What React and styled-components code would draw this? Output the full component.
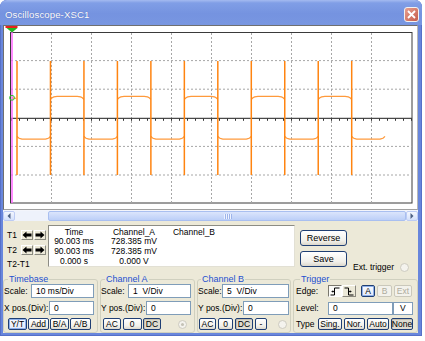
import React from 'react';
import styled, { createGlobalStyle, css } from 'styled-components';

const GlobalStyle = createGlobalStyle`
  html, body { margin: 0; padding: 0; background: #fff; }
  body {
    font-family: "Liberation Sans", Arial, sans-serif;
    font-size: 8.5px;
    color: #000;
  }
  * { box-sizing: border-box; }
`;

const Window = styled.div`
  width: 422px;
  height: 336px;
  display: flex;
  flex-direction: column;
  background: #6886dc;
  border-radius: 7px 7px 0 0;
  overflow: hidden;
  box-shadow: inset 0 0 0 1px #5670c8;
`;

const TitleBar = styled.div`
  height: 25px;
  flex-shrink: 0;
  display: flex;
  align-items: flex-start;
  justify-content: space-between;
  padding: 0 3px 0 5px;
  background: linear-gradient(#a4baf0 0%, #809ee6 12%, #7593e0 55%, #7896e1 100%);
`;

const Title = styled.span`
  color: #fff;
  font-size: 9.6px;
  line-height: 12px;
  margin-top: 9px;
  letter-spacing: 0.1px;
  text-shadow: 0 0 1px rgba(40, 60, 140, 0.6);
`;

const CloseButton = styled.div`
  width: 15px;
  height: 15px;
  margin-top: 7px;
  border: 1px solid #f2f2f2;
  border-radius: 3px;
  background: linear-gradient(135deg, #e7a090, #c65d4b);
  display: flex;
  align-items: center;
  justify-content: center;
`;

const Body = styled.div`
  flex: 1;
  margin: 0 4px 3px 3px;
  background: #ece9d8;
  display: flex;
  flex-direction: column;
`;

const ScopePanel = styled.div`
  height: 185px;
  background: #fff;
  border: 1px solid;
  border-color: #6f6f6f #b8b8b8 #a0a0a0 #6f6f6f;
  svg { display: block; }
`;

const Scrollbar = styled.div`
  height: 11px;
  display: flex;
  background: #f3f5fb;
  padding-top: 1px;
`;

const ScrollButton = styled.div`
  width: 12px;
  display: flex;
  align-items: center;
  justify-content: center;
  background: linear-gradient(#f4f7fe, #d4e0fb);
  border: 1px solid #bccbf4;
  border-radius: 2px;
`;

const Track = styled.div`
  flex: 1;
  display: flex;
  padding-left: 33px;
  background: #eef2fb;
`;

const Thumb = styled.div`
  flex: 1;
  display: flex;
  align-items: center;
  justify-content: center;
  gap: 1px;
  border: 1px solid #a9bff0;
  border-radius: 2px;
  background: linear-gradient(#dbe5fc, #bccff8);
  span {
    width: 1px;
    height: 5px;
    background: #eef3ff;
    box-shadow: 1px 0 0 #9db4ea;
  }
`;

const Controls = styled.div`
  flex: 1;
  display: flex;
  flex-direction: column;
`;

const CursorRow = styled.div`
  display: flex;
  margin-top: 4px;
  height: 45px;
`;

const CursorLabels = styled.div`
  display: grid;
  grid-template-columns: 14px 24px;
  grid-template-rows: 15px 15px 13px;
  align-items: center;
  margin-left: 4px;
  padding-top: 2px;
`;

const ArrowPair = styled.div`
  display: flex;
  gap: 1px;
`;

const ArrowButton = styled.div`
  width: 12px;
  height: 10px;
  display: flex;
  align-items: center;
  justify-content: center;
  background: #ece9d8;
  border: 1px solid;
  border-color: #fff #8a8a80 #8a8a80 #fff;
`;

const Readout = styled.div`
  width: 247px;
  height: 42px;
  margin-left: 3px;
  background: #fff;
  border: 1px solid;
  border-color: #8c8c84 #e2e0d4 #e2e0d4 #8c8c84;
  display: grid;
  grid-template-columns: 44px 76px 44px;
  grid-auto-rows: 9.7px;
  line-height: 9.7px;
  padding: 1.5px 0 0 3px;
  text-align: center;
  white-space: nowrap;
`;

const ActionColumn = styled.div`
  display: flex;
  flex-direction: column;
  margin-left: 5px;
  padding-top: 5px;
  gap: 5px;
`;

const xpFace = css`
  border: 1px solid #1f3f74;
  border-radius: 3px;
  background: linear-gradient(#ffffff, #f1f0ea 70%, #dcd8cc);
  font-family: inherit;
  color: #000;
  padding: 0;
  display: flex;
  align-items: center;
  justify-content: center;
`;

const ActionButton = styled.div`
  ${xpFace};
  width: 47px;
  height: 16px;
  font-size: 9px;
`;

const SaveRow = styled.div`
  display: flex;
  align-items: flex-end;
`;

const ExtTrigger = styled.div`
  display: flex;
  align-items: center;
  margin-left: 6px;
  margin-bottom: -5px;
  gap: 6px;
`;

const Radio = styled.div`
  width: 9px;
  height: 9px;
  border-radius: 50%;
  border: 1px solid #cdcbc0;
  background: #f4f3ee;
  display: flex;
  align-items: center;
  justify-content: center;
  ${(p) => p.$dot && css`
    &::after {
      content: "";
      width: 3px;
      height: 3px;
      border-radius: 50%;
      background: #c4c2b6;
    }
  `}
`;

const GroupRow = styled.div`
  display: flex;
  gap: 2px;
  margin-top: 4px;
  height: 59px;
`;

const Group = styled.fieldset`
  width: ${(p) => p.$w}px;
  margin: 0;
  min-width: 0;
  padding: 0 ${(p) => p.$pr ?? 3}px 2px ${(p) => p.$pl ?? 0}px;
  border: 1px solid #d0d0bf;
  border-radius: 3px;
  display: flex;
  flex-direction: column;
  gap: 3px;
`;

const Legend = styled.legend`
  color: #1d4fd0;
  font-size: 9px;
  line-height: 10px;
  padding: 0 1px;
  margin-left: ${(p) => p.$ml ?? 4}px;
`;

const Row = styled.div`
  display: flex;
  align-items: center;
  height: ${(p) => p.$h}px;
  padding-left: ${(p) => p.$pl ?? 0}px;
  gap: ${(p) => p.$gap ?? 0}px;
`;

const Label = styled.span`
  flex-shrink: 0;
  width: ${(p) => (p.$w ? `${p.$w}px` : 'auto')};
  white-space: nowrap;
`;

const Field = styled.div`
  width: ${(p) => p.$w}px;
  height: ${(p) => p.$h ?? 14}px;
  margin-left: ${(p) => (p.$auto ? 'auto' : '0')};
  background: #fff;
  border: 1px solid #7f9db9;
  padding-left: ${(p) => p.$pl ?? 4}px;
  display: flex;
  align-items: center;
  white-space: pre;
`;

const SmallButton = styled.div`
  ${xpFace};
  width: ${(p) => p.$w}px;
  height: 12px;
  border-radius: 2px;
  flex-shrink: 0;
  margin-left: ${(p) => p.$ml ?? 0}px;
  ${(p) => p.$mode === 'focus' && css`
    box-shadow: inset 0 0 0 1px #8fb0ea;
    background: linear-gradient(#f6f9ff, #e3eaf8);
  `}
  ${(p) => p.$mode === 'down' && css`
    background: #dedbd0;
    box-shadow: inset 1px 1px 0 #c4c0b2;
  `}
  ${(p) => p.$mode === 'off' && css`
    border-color: #cac8bb;
    color: #aeab9c;
    background: #f3f2ec;
  `}
`;

const EdgePair = styled.div`
  display: flex;
`;

const EdgeButton = styled.div`
  width: 14px;
  height: 12px;
  display: flex;
  align-items: center;
  justify-content: center;
  border: 1px solid;
  ${(p) => (p.$down
    ? css`
      border-color: #7a786e #fff #fff #7a786e;
      background: #fbfbf8;
    `
    : css`
      border-color: #fff #8a887e #8a887e #fff;
      background: #ece9d8;
    `)}
`;

const Spacer = styled.div`
  margin-left: auto;
  margin-right: ${(p) => p.$mr ?? 0}px;
`;

// trace edges, px in page coordinates
const edges = Array.from({ length: 11 }, (_, k) => 17 + 33.47 * k);

function plateau(x0, x1, high) {
  const pts = [];
  const n = 20;
  for (let i = 0; i <= n; i++) {
    const t = i / n;
    const u = 2 * t - 1;
    const bump = 1 - Math.pow(u, 8);
    const y = high ? 99.4 - 3 * bump : 136.4 + 2.8 * bump;
    pts.push(`${(x0 + (x1 - x0) * t).toFixed(2)},${y.toFixed(2)}`);
  }
  return 'M' + pts.join(' L');
}

function tracePath() {
  let d = 'M12 97.8 L16 98.4 ';
  edges.forEach((e, k) => {
    const next = k < edges.length - 1 ? edges[k + 1] : 385;
    d += plateau(e, next, k % 2 === 1) + ' ';
  });
  return d;
}

function ScopeDisplay() {
  const vlines = [];
  for (let x = 51; x < 411; x += 40) vlines.push(x);
  const hlines = [60.6, 89.2, 146.4, 175];
  const ticks = [];
  for (let x = 11; x <= 411; x += 8) ticks.push(x);

  return (
    <svg width="413" height="183" viewBox="4 26 413 183">
      <rect x="10.5" y="32.5" width="401.5" height="170.5" fill="#fff" stroke="#3a3a3a" />
      {vlines.map((x) => (
        <line key={`v${x}`} x1={x + 0.5} y1="33" x2={x + 0.5} y2="203"
          stroke="#a6a6a6" strokeDasharray="2 2" />
      ))}
      {hlines.map((y) => (
        <line key={`h${y}`} x1="11" y1={y} x2="412" y2={y}
          stroke="#a6a6a6" strokeDasharray="2 2" />
      ))}
      <line x1="11" y1="118.4" x2="412" y2="118.4" stroke="#4a4a4a" strokeWidth="1.4" />
      {ticks.map((x) => (
        <line key={`t${x}`} x1={x + 0.5} y1="118.5" x2={x + 0.5} y2="120.8" stroke="#333" />
      ))}
      <path d={tracePath()} fill="none" stroke="#ff9a3c" strokeWidth="1.3" />
      {edges.map((e) => (
        <line key={`e${e}`} x1={e} y1="61" x2={e} y2="175" stroke="#ff8410" strokeWidth="1.5" />
      ))}
      <line x1="12" y1="28" x2="12" y2="203" stroke="#ff66ff" strokeWidth="1.5" />
      <rect x="5.5" y="25.5" width="12" height="2.5" fill="#e8201c" />
      <polygon points="6.5,28 17.5,28 12,32.5" fill="#22b822" />
      <circle cx="12" cy="97.8" r="2.4" fill="none" stroke="#2fc42f" strokeWidth="1" />
    </svg>
  );
}

const LeftArrow = () => (
  <svg width="10" height="8" viewBox="0 0 10 8">
    <path d="M0.5 4 L4.5 0.5 V2.6 H9.5 V5.4 H4.5 V7.5 Z" fill="#000" />
  </svg>
);

const RightArrow = () => (
  <svg width="10" height="8" viewBox="0 0 10 8">
    <path d="M9.5 4 L5.5 0.5 V2.6 H0.5 V5.4 H5.5 V7.5 Z" fill="#000" />
  </svg>
);

const RisingEdge = () => (
  <svg width="10" height="9" viewBox="0 0 10 9">
    <path d="M0.5 8 H4.5 V1 H9.5" fill="none" stroke="#000" strokeWidth="1" />
    <path d="M2 4.5 H4.5 M2.8 3.5 L2 4.5 L2.8 5.5" fill="none" stroke="#000" strokeWidth="0.9" />
  </svg>
);

const FallingEdge = () => (
  <svg width="10" height="9" viewBox="0 0 10 9">
    <path d="M0.5 1 H4.5 V8 H9.5" fill="none" stroke="#000" strokeWidth="1" />
    <path d="M4.5 4.5 H7 M6.2 3.5 L7 4.5 L6.2 5.5" fill="none" stroke="#000" strokeWidth="0.9" />
  </svg>
);

export default function App() {
  return (
    <>
      <GlobalStyle />
      <Window>
        <TitleBar>
          <Title>Oscilloscope-XSC1</Title>
          <CloseButton>
            <svg width="9" height="9" viewBox="0 0 9 9">
              <path d="M1 1 L8 8 M8 1 L1 8" stroke="#fff" strokeWidth="1.8" />
            </svg>
          </CloseButton>
        </TitleBar>
        <Body>
          <ScopePanel>
            <ScopeDisplay />
          </ScopePanel>
          <Scrollbar>
            <ScrollButton>
              <svg width="4" height="6" viewBox="0 0 4 6"><path d="M3.5 0 L0.5 3 L3.5 6 Z" fill="#4d6185" /></svg>
            </ScrollButton>
            <Track>
              <Thumb><span /><span /><span /><span /></Thumb>
            </Track>
            <ScrollButton>
              <svg width="4" height="6" viewBox="0 0 4 6"><path d="M0.5 0 L3.5 3 L0.5 6 Z" fill="#4d6185" /></svg>
            </ScrollButton>
          </Scrollbar>
          <Controls>
            <CursorRow>
              <CursorLabels>
                <span>T1</span>
                <ArrowPair>
                  <ArrowButton><LeftArrow /></ArrowButton>
                  <ArrowButton><RightArrow /></ArrowButton>
                </ArrowPair>
                <span>T2</span>
                <ArrowPair>
                  <ArrowButton><LeftArrow /></ArrowButton>
                  <ArrowButton><RightArrow /></ArrowButton>
                </ArrowPair>
                <span style={{ gridColumn: '1 / span 2' }}>T2-T1</span>
              </CursorLabels>
              <Readout>
                <span>Time</span><span>Channel_A</span><span>Channel_B</span>
                <span>90.003 ms</span><span>728.385 mV</span><span />
                <span>90.003 ms</span><span>728.385 mV</span><span />
                <span>0.000 s</span><span>0.000 V</span><span />
              </Readout>
              <ActionColumn>
                <ActionButton>Reverse</ActionButton>
                <SaveRow>
                  <ActionButton>Save</ActionButton>
                  <ExtTrigger>
                    <span>Ext. trigger</span>
                    <Radio />
                  </ExtTrigger>
                </SaveRow>
              </ActionColumn>
            </CursorRow>

            <GroupRow>
              <Group $w={95} $pl={0}>
                <Legend $ml={4}>Timebase</Legend>
                <Row $h={14}>
                  <Label>Scale:</Label>
                  <Field $w={63} $auto>10 ms/Div</Field>
                </Row>
                <Row $h={14}>
                  <Label>X pos.(Div):</Label>
                  <Field $w={45} $auto>0</Field>
                </Row>
                <Row $h={12} $pl={4} $gap={1}>
                  <SmallButton $w={19} $mode="focus">Y/T</SmallButton>
                  <SmallButton $w={21}>Add</SmallButton>
                  <SmallButton $w={19}>B/A</SmallButton>
                  <SmallButton $w={21}>A/B</SmallButton>
                </Row>
              </Group>

              <Group $w={95} $pl={0}>
                <Legend $ml={4}>Channel A</Legend>
                <Row $h={14}>
                  <Label>Scale:</Label>
                  <Field $w={63} $auto>1  V/Div</Field>
                </Row>
                <Row $h={14}>
                  <Label>Y pos.(Div):</Label>
                  <Field $w={45} $auto>0</Field>
                </Row>
                <Row $h={12} $pl={2} $gap={1.5}>
                  <SmallButton $w={18}>AC</SmallButton>
                  <SmallButton $w={19}>0</SmallButton>
                  <SmallButton $w={18} $mode="down">DC</SmallButton>
                  <Spacer $mr={4}><Radio $dot /></Spacer>
                </Row>
              </Group>

              <Group $w={94} $pl={0} $pr={1}>
                <Legend $ml={3}>Channel B</Legend>
                <Row $h={14}>
                  <Label>Scale:</Label>
                  <Field $w={67} $auto>5  V/Div</Field>
                </Row>
                <Row $h={14}>
                  <Label>Y pos.(Div):</Label>
                  <Field $w={46} $auto>0</Field>
                </Row>
                <Row $h={12} $pl={1} $gap={2}>
                  <SmallButton $w={17}>AC</SmallButton>
                  <SmallButton $w={15}>0</SmallButton>
                  <SmallButton $w={18} $mode="down">DC</SmallButton>
                  <SmallButton $w={12}>-</SmallButton>
                  <Spacer $mr={2}><Radio /></Spacer>
                </Row>
              </Group>

              <Group $w={125} $pl={2} $pr={2}>
                <Legend $ml={4}>Trigger</Legend>
                <Row $h={14}>
                  <Label $w={32}>Edge:</Label>
                  <EdgePair>
                    <EdgeButton $down><RisingEdge /></EdgeButton>
                    <EdgeButton><FallingEdge /></EdgeButton>
                  </EdgePair>
                  <SmallButton $w={14} $mode="focus" $ml={5}>A</SmallButton>
                  <SmallButton $w={15} $mode="off" $ml={2}>B</SmallButton>
                  <SmallButton $w={18} $mode="off" $ml={2}>Ext</SmallButton>
                </Row>
                <Row $h={14}>
                  <Label $w={32}>Level:</Label>
                  <Field $w={65} $h={13}>0</Field>
                  <Field $w={20} $h={13} $pl={6}>V</Field>
                </Row>
                <Row $h={12} $gap={2}>
                  <Label $w={20}>Type</Label>
                  <SmallButton $w={24}>Sing.</SmallButton>
                  <SmallButton $w={21}>Nor.</SmallButton>
                  <SmallButton $w={22}>Auto</SmallButton>
                  <SmallButton $w={22} $mode="down">None</SmallButton>
                </Row>
              </Group>
            </GroupRow>
          </Controls>
        </Body>
      </Window>
    </>
  );
}
